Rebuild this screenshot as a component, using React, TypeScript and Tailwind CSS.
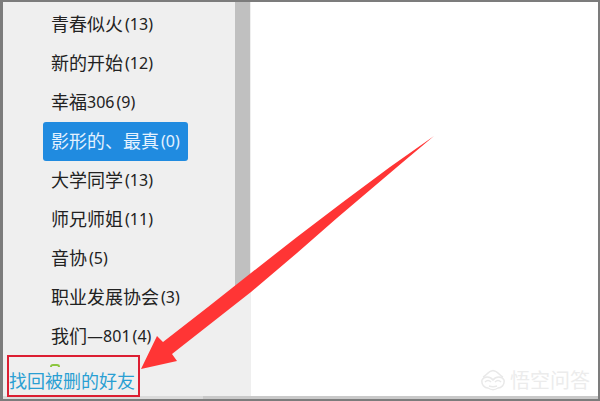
import { useState } from "react";

const groups = [
  { name: "青春似火", count: 13 },
  { name: "新的开始", count: 12 },
  { name: "幸福", suffix: "306", count: 9 },
  { name: "影形的、最真", count: 0 },
  { name: "大学同学", count: 13 },
  { name: "师兄师姐", count: 11 },
  { name: "音协", count: 5 },
  { name: "职业发展协会", count: 3 },
  { name: "我们—", suffix: "801", count: 4 },
];

function Arrow() {
  return (
    <svg
      className="pointer-events-none absolute top-[131px] left-[134px]"
      width="300"
      height="240"
      viewBox="137 133 300 240"
      fill="#ff3535"
      aria-hidden="true"
    >
      <path d="M434 136 L390 167 L343 202 L297 237 L251 273 L208 307 L163 342 L157 336 L141 369 L177 361 L172 354 L251 292 L297 253 L337 218 L370 190 L403 162 Z" />
    </svg>
  );
}

function Watermark() {
  return (
    <div className="flex items-center gap-1 font-['Noto_Sans_CJK_SC',sans-serif] text-[20px] leading-6 text-[#ececec]">
      <svg width="26" height="22" viewBox="0 0 26 22" fill="none" stroke="#e9e9e9" strokeWidth="1.5" aria-hidden="true">
        <path d="M3 8 C6 7 8 2 13 1.500 C18 2 20 7 23 8" />
        <path d="M13 11 C10 7 4 7 2 11 C1 16 5 19 8 19 C11 21 15 21 18 19 C21 19 25 16 24 11 C22 7 16 7 13 11 Z" />
        <path d="M5 13 C7 11 9 11 11 13 M15 13 C17 11 19 11 21 13 M9 17 C12 18 14 18 17 17" />
      </svg>
      <span>悟空问答</span>
    </div>
  );
}

export default function App() {
  const [selected, setSelected] = useState(3);

  return (
    <div className="relative flex min-h-screen flex-col border-t-2 border-r-2 border-b-2 border-l-[3px] border-[#7c7c7c] bg-white font-['Noto_Sans','Noto_Sans_CJK_SC',sans-serif]">
      <main className="flex flex-1">
        <aside className="flex w-[248px] shrink-0 bg-[#efefef]">
          <div className="flex flex-1 flex-col">
            <ul className="pt-[3px] pl-10">
              {groups.map((g, i) => (
                <li key={g.name}>
                  <button
                    type="button"
                    onClick={() => setSelected(i)}
                    className={`flex h-[39px] items-center gap-[2px] rounded-[3px] px-2 pb-[2px] text-[18px] whitespace-nowrap ${
                      i === selected ? "bg-[#208be0] text-[#e4f2ff]" : "text-[#222222]"
                    }`}
                  >
                    <span className="flex items-center font-['Noto_Sans_CJK_SC',sans-serif]">
                      {g.name}
                      {g.suffix && <span className="font-['Noto_Sans',sans-serif] text-[16px]">{g.suffix}</span>}
                    </span>
                    <span className="text-[16px]">({g.count})</span>
                  </button>
                </li>
              ))}
            </ul>

            <div className="relative flex flex-1 items-center pl-[6px]">
              <span className="absolute top-2 left-[47px] h-[3px] w-[10px] rounded-t-sm border-2 border-b-0 border-[#8cc63f]" />
              <a
                href="#recover"
                className="pt-[8px] font-['Noto_Sans_CJK_SC',sans-serif] text-[18px] leading-6 whitespace-nowrap text-[#2a9fd3]"
              >
                找回被删的好友
              </a>
              <span className="pointer-events-none absolute -top-px -bottom-px left-[4px] w-[133px] border-2 border-[#dc1e32]" />
            </div>
          </div>

          <div className="w-4">
            <div className="h-[290px] w-[15px] bg-[#c0c0c0]" />
          </div>
        </aside>

        <section className="flex flex-1 items-end justify-end pr-2 pb-1">
          <Watermark />
        </section>
      </main>

      <div className="flex h-[3px] bg-[#c9c9c9]">
        <div className="w-[200px] bg-[#dadada]" />
      </div>

      <Arrow />
    </div>
  );
}
